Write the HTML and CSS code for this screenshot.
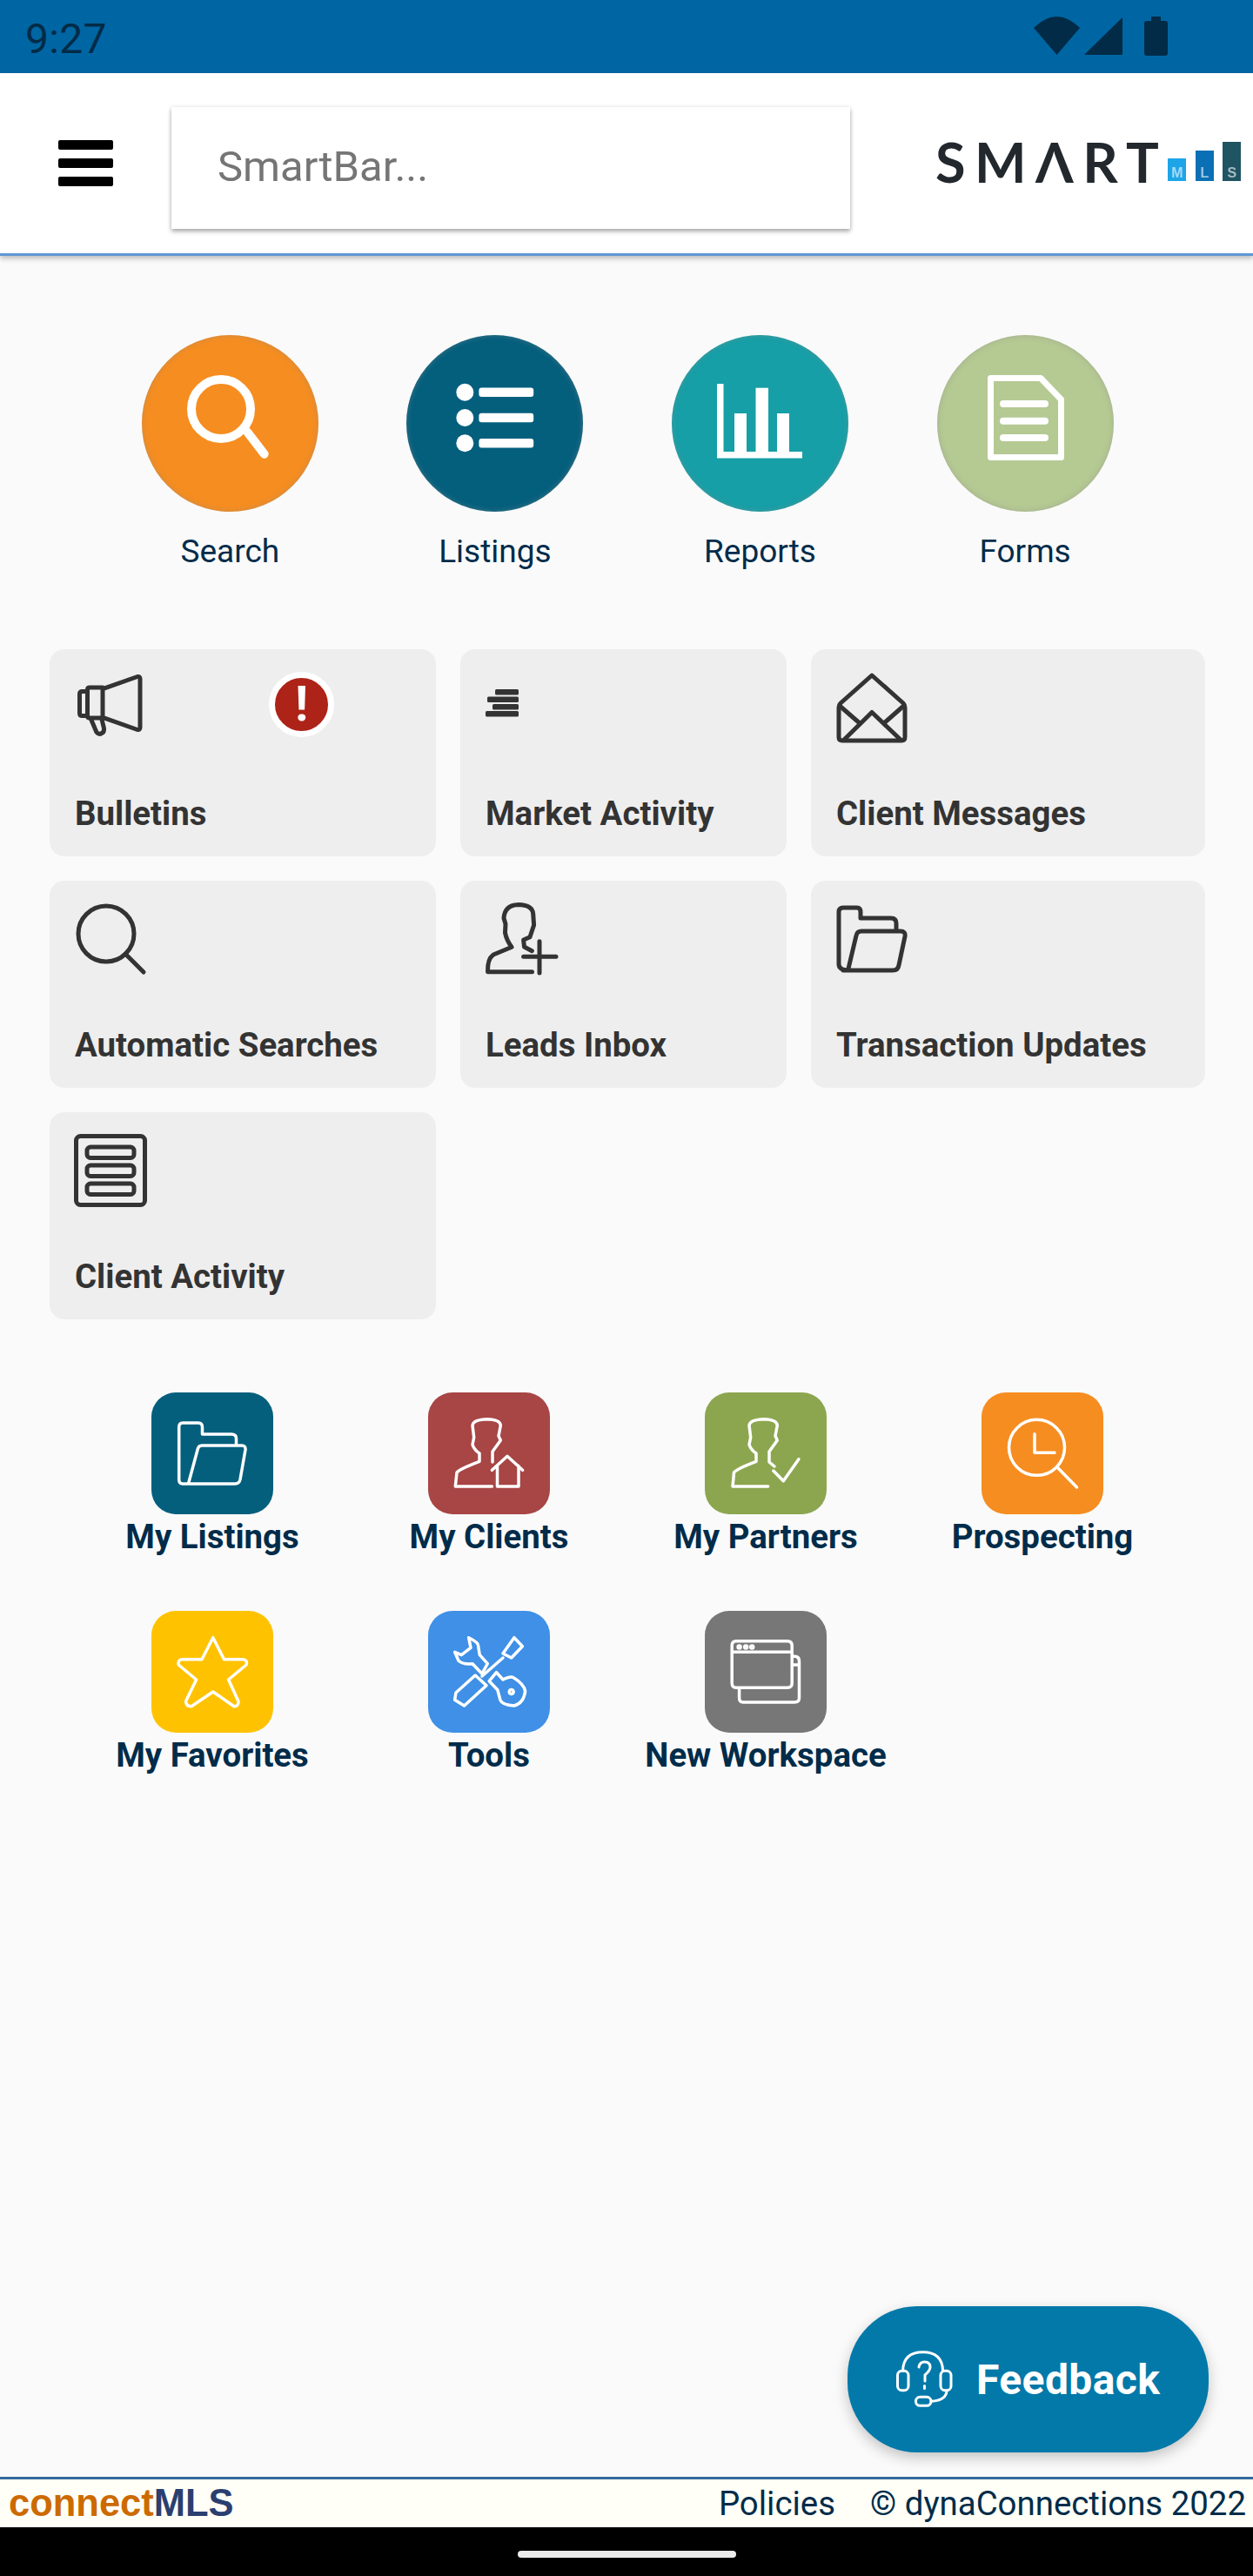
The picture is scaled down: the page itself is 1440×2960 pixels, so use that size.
FILE: index.html
```html
<!DOCTYPE html>
<html lang="en">
<head>
<meta charset="utf-8">
<title>connectMLS</title>
<link rel="stylesheet" href="styles.css">
</head>
<body>
<div class="status">
  <span class="time">9:27</span>
  <svg class="status-icons" viewBox="0 0 154 45">
    <path d="M0 13Q26.500 -13 53 13L26.500 44Z"/>
    <path d="M58 44H102V1Z"/>
    <path d="M135 0H146V5H151Q154 5 154 8V42Q154 45 151 45H130Q127 45 127 42V8Q127 5 130 5H135Z"/>
  </svg>
</div>
<header class="topbar">
  <div class="burger"><i></i><i></i><i></i></div>
  <div class="smartbar">SmartBar...</div>
  <div class="logo">
    <span class="logo-text">SMΛRT</span>
    <span class="logo-bars">
      <b class="bar-m">M</b><b class="bar-l">L</b><b class="bar-s">S</b>
    </span>
  </div>
</header>
<main class="content">
  <section class="circles">
    <a class="circle-item">
      <span class="circle c-orange">
        <svg class="white-line" viewBox="0 0 203 203"><circle cx="91" cy="85" r="34" stroke-width="10"/><path d="M121.500 111.700L140.700 136.700" stroke-width="10"/></svg>
      </span>
      <span class="circle-label">Search</span>
    </a>
    <a class="circle-item">
      <span class="circle c-navy">
        <svg class="white-fill" viewBox="0 0 203 203"><circle cx="67.300" cy="65.700" r="10"/><circle cx="67.300" cy="95" r="10"/><circle cx="67.300" cy="124.300" r="10"/><rect x="83.400" y="60.500" width="62.800" height="10.500" rx="3"/><rect x="83.400" y="89.800" width="62.800" height="10.500" rx="3"/><rect x="83.400" y="119" width="62.800" height="10.500" rx="3"/></svg>
      </span>
      <span class="circle-label">Listings</span>
    </a>
    <a class="circle-item">
      <span class="circle c-teal">
        <svg class="white-fill" viewBox="0 0 203 203"><rect x="52" y="56" width="7.500" height="85"/><rect x="52" y="134" width="98" height="7.500"/><rect x="72" y="90" width="14" height="46"/><rect x="96.500" y="60.700" width="14.500" height="75"/><rect x="121" y="90" width="14" height="46"/></svg>
      </span>
      <span class="circle-label">Reports</span>
    </a>
    <a class="circle-item">
      <span class="circle c-sage">
        <svg class="white-line" viewBox="0 0 203 203"><path d="M61.500 49.500H119L142.500 74V140.500H61.500Z" stroke-width="7"/><path d="M76 79H124M76 98.700H124M76 118H124" stroke-width="8"/></svg>
      </span>
      <span class="circle-label">Forms</span>
    </a>
  </section>

  <section class="cards">
    <a class="card">
      <svg class="card-icon" viewBox="0 0 90 90"><path d="M32 17.700L72 3.500Q75 3 75 6V62Q75 65 72 64.500L32 50.300ZM32 16H17Q14.500 16 14.500 18.500V48.500Q14.500 51 17 51H32M14.500 20.500H8.500Q5.500 20.500 5.500 23.500V45.500Q5.500 48.500 8.500 48.500H14.500M18 51L25 67.500Q27.500 70.500 31 68.500Q34 67 33.500 63L30.500 50.500"/></svg>
      <span class="card-label">Bulletins</span>
      <span class="alert">!</span>
    </a>
    <a class="card">
      <svg class="card-icon card-fill" viewBox="0 0 90 90"><rect x="11" y="18" width="27" height="6.500" rx="1.500"/><rect x="2" y="26.500" width="36" height="6.500" rx="1.500"/><rect x="8" y="35" width="30" height="6.500" rx="1.500"/><rect y="43" width="38" height="6.500" rx="1.500"/></svg>
      <span class="card-label">Market Activity</span>
    </a>
    <a class="card">
      <svg class="card-icon" viewBox="0 0 90 90"><path d="M41 2L77 34Q79 36 79 39V73Q79 77 75 77H7Q3 77 3 73V39Q3 36 5 34ZM41 2"/><path d="M9 76L41 44.500L74 76M4.500 37.500L27 57M77 37.500L56 56"/></svg>
      <span class="card-label">Client Messages</span>
    </a>
    <a class="card">
      <svg class="card-icon" viewBox="0 0 90 90"><circle cx="36" cy="33" r="32"/><path d="M58 56L79 77"/></svg>
      <span class="card-label">Automatic Searches</span>
    </a>
    <a class="card">
      <svg class="card-icon" viewBox="0 0 90 90"><path d="M53.500 76.700H2.500Q2 62 9 57L30 48.300Q24 40 22.500 31.700L23 21.700L21 15Q22 0 37.800 -0.500Q54 0 54.700 10L55.600 23L51 36.700L43.600 40L44.500 48L53.400 52.700"/><path d="M62 41.700V78M43.600 59.300H81"/></svg>
      <span class="card-label">Leads Inbox</span>
    </a>
    <a class="card">
      <svg class="card-icon" viewBox="0 0 90 90"><path d="M8 75H16Q3 75 3 68V8Q3 3 8 3H24Q28 3 28 8V15H63Q69 15 69 21V29M16 75H65Q71 75 72 69L79 36Q80 30 74 30H29Q24 30 23 35L14 73"/></svg>
      <span class="card-label">Transaction Updates</span>
    </a>
    <a class="card">
      <svg class="card-icon" viewBox="0 0 90 90"><rect x="1.500" y="-0.500" width="79" height="79" rx="5"/><rect x="14" y="12" width="54" height="12.500" rx="4"/><rect x="14" y="33" width="54" height="12.500" rx="4"/><rect x="14" y="54" width="54" height="12.500" rx="4"/></svg>
      <span class="card-label">Client Activity</span>
    </a>
  </section>

  <section class="tiles">
    <a class="tile-item">
      <span class="tile t-navy"><svg class="tile-icon" viewBox="0 0 140 140"><path d="M44 105H36Q31.700 105 31.700 100V40Q31.700 35 36 35H54Q58.500 35 58.500 40V48H92Q97.500 48 97.500 53V61M44 105H96Q101 105 102 100L108 66Q108.500 61 104 61H58Q54 61 53 66L43 103"/></svg></span>
      <span class="tile-label">My Listings</span>
    </a>
    <a class="tile-item">
      <span class="tile t-red"><svg class="tile-icon" viewBox="0 0 140 140"><path d="M73.400 108H31.300L33 92Q36 88 59 79.300V70Q53 66 51 60L52.700 51.700L51 38Q52 31 68 30.700Q83 31 83.300 38L81 50L83.300 55L74 68V80"/><path d="M73.400 89.300L91 73.300L108.600 89.300M79.500 84.500V108H104V84.500"/></svg></span>
      <span class="tile-label">My Clients</span>
    </a>
    <a class="tile-item">
      <span class="tile t-green"><svg class="tile-icon" viewBox="0 0 140 140"><path d="M72.700 108H32L33.500 92Q36 88 59 79.300V70Q53 66 51 60L52.700 51.700L51 38Q52 31 68 30.700Q83 31 83.300 38L81 50L83.300 55L74 68V80L80 85"/><path d="M78.800 90L90.300 101.700L107.900 76.700"/></svg></span>
      <span class="tile-label">My Partners</span>
    </a>
    <a class="tile-item">
      <span class="tile t-orange"><svg class="tile-icon" viewBox="0 0 140 140"><circle cx="63.500" cy="63.300" r="32"/><path d="M61 47.700V69.300H84M88 87L109.500 109"/></svg></span>
      <span class="tile-label">Prospecting</span>
    </a>
    <a class="tile-item">
      <span class="tile t-yellow"><svg class="tile-icon" viewBox="0 0 140 140"><path d="M70.800 30.700L83.500 55.700H104.600Q111 56 109 62L88.600 79L100 104Q100 110 95 109.700L70.800 93L46 109.700Q40 110 39.500 104L51.600 79L31.200 62Q30 56 35.700 55.700H58Z"/></svg></span>
      <span class="tile-label">My Favorites</span>
    </a>
    <a class="tile-item">
      <span class="tile t-blue"><svg class="tile-icon" viewBox="0 0 140 140"><path d="M98.900 30.700L108.400 40.700L95.700 54L86 49ZM86 54L62 75M54.200 74L67 85.700L41.500 109L30.600 102.300L32 94Z"/><path d="M46.600 30.700Q57 36 57.400 39L59.300 50.700L68.300 60.700L61.900 72.300L51 60.700Q40 62 35 57.300L30.600 47.300L38.300 50.700L49 42.300ZM78.500 70.700L86.100 79Q96 74 98.900 77.300Q110 84 111.600 92.300Q110 106 98.900 109Q85 108 82.900 102.300L79.800 90.700L70.200 80.700Z"/><circle cx="95.700" cy="93" r="2.500"/></svg></span>
      <span class="tile-label">Tools</span>
    </a>
    <a class="tile-item">
      <span class="tile t-grey"><svg class="tile-icon" viewBox="0 0 140 140"><path d="M36 34.700H95Q100.200 34.700 100.200 40V83Q100.200 88.300 95 88.300H36Q31.200 88.300 31.200 83V40Q31.200 34.700 36 34.700ZM31.200 47.300H100.200M100.200 52.300H103Q108.500 52.300 108.500 58V100Q108.500 105 103 105H44Q39.600 105 39.600 100V88.300M100.200 62H108.500"/><circle cx="39.600" cy="41.500" r="1.500"/><circle cx="47.200" cy="41.500" r="1.500"/><circle cx="54.200" cy="41.500" r="1.500"/></svg></span>
      <span class="tile-label">New Workspace</span>
    </a>
  </section>

  <a class="fab">
    <svg class="fab-icon" viewBox="0 0 64 64"><path d="M7.600 22.300Q8 0.700 30.600 0.700Q53 0.700 53.600 22.300M58 44.700Q58 56 40 57.300"/><rect x="1.500" y="22.300" width="12.500" height="22.400" rx="5"/><rect x="51" y="22.300" width="12" height="22.400" rx="5"/><rect x="22.400" y="52.300" width="17.600" height="10" rx="5"/><path d="M26 18Q27 12 32.500 12Q39 12 39 18Q39 22 33 27V34M32.500 39.500V42.500"/></svg>
    <span>Feedback</span>
  </a>
</main>
<footer class="footer">
  <div class="brand"><span class="brand-a">connect</span><span class="brand-b">MLS</span></div>
  <div class="foot-links"><span>Policies</span><span>© dynaConnections 2022</span></div>
</footer>
<div class="navbar"><i></i></div>
</body>
</html>
```
FILE: styles.css
```css
* { box-sizing: border-box; }
html, body { margin: 0; padding: 0; }
body {
  width: 1440px;
  height: 2960px;
  display: flex;
  flex-direction: column;
  background: #fafafa;
  font-family: Roboto, "Liberation Sans", sans-serif;
  color: #002c4a;
  overflow: hidden;
}
a { display: block; color: inherit; text-decoration: none; }
svg { display: block; overflow: visible; }

.status {
  height: 84px;
  flex: none;
  background: #0066a3;
  color: #022b47;
  display: flex;
  align-items: flex-start;
  justify-content: space-between;
  padding: 17px 98px 0 29px;
}
.time { font-size: 48px; line-height: 56px; letter-spacing: .3px; }
.status-icons { width: 154px; height: 45px; margin-top: 2px; fill: #022b47; }

.topbar {
  height: 210px;
  flex: none;
  background: #fff;
  border-bottom: 3px solid #5f97d3;
  box-shadow: 0 3px 6px rgba(0,0,0,.26);
  display: flex;
  align-items: flex-start;
  position: relative;
  z-index: 2;
}
.burger {
  width: 63px;
  margin: 77px 0 0 67px;
  display: flex;
  flex-direction: column;
  gap: 10.500px;
}
.burger i { display: block; height: 10.500px; background: #000; border-radius: 2px; }
.smartbar {
  width: 780px;
  height: 140px;
  margin: 39px 0 0 67px;
  padding: 0 0 0 53px;
  background: #fff;
  color: #757575;
  font-size: 49px;
  line-height: 138px;
  box-shadow: 0 3px 5px rgba(0,0,0,.32), 0 0 5px rgba(0,0,0,.08);
}
.logo {
  margin: 79px 0 0 98px;
  width: 350px;
  height: 45px;
  display: flex;
  justify-content: space-between;
  align-items: flex-end;
  filter: blur(.6px);
}
.logo-text {
  font-family: Lato, sans-serif;
  font-weight: 700;
  font-size: 63px;
  line-height: 45px;
  letter-spacing: 10.500px;
  color: #22282d;
  white-space: nowrap;
}
.logo-bars { display: flex; align-items: flex-end; gap: 10.500px; }
.logo-bars b {
  display: block;
  width: 21px;
  color: rgba(255,255,255,.6);
  font: 700 16px/16px "Liberation Sans", sans-serif;
  text-align: center;
}
.logo-bars .bar-m { height: 26px; background: #1ea5e8; padding-top: 9px; }
.logo-bars .bar-l { height: 35px; background: #0a6fb4; padding-top: 18px; }
.logo-bars .bar-s { height: 45px; background: #1f5463; padding-top: 28px; }

.content {
  flex: 1;
  position: relative;
}

.circles {
  display: grid;
  grid-template-columns: repeat(4, 304.600px);
  padding: 91px 0 0 112px;
}
.circle-item { display: flex; flex-direction: column; align-items: center; }
.circle {
  width: 203px;
  height: 203px;
  border-radius: 50%;
  box-shadow: inset 0 0 6px rgba(140,140,140,.45);
}
.circle svg { width: 203px; height: 203px; }
.c-orange { background: #f68d20; }
.c-navy { background: #045f7d; }
.c-teal { background: #169fa7; }
.c-sage { background: #b5c993; }
.circle-label { margin-top: 25px; font-size: 37px; line-height: 42px; }
.white-line { fill: none; stroke: #fff; stroke-linecap: round; stroke-linejoin: round; }
.white-fill { fill: #fff; }

.cards {
  display: grid;
  grid-template-columns: 444px 375px 453px;
  grid-auto-rows: 238px;
  gap: 28px;
  padding: 0 0 0 57px;
  margin-top: 91px;
}
.card {
  background: #eee;
  border-radius: 17px;
  padding: 28px 29px 0;
  position: relative;
  color: #333;
}
.card-icon {
  width: 90px;
  height: 90px;
  fill: none;
  stroke: #333;
  stroke-width: 5;
  stroke-linecap: round;
  stroke-linejoin: round;
}
.card-icon.card-fill { fill: #333; stroke: none; }
.card-label {
  display: block;
  margin-top: 50px;
  font-size: 38.400px;
  line-height: 42px;
  font-weight: 700;
  white-space: nowrap;
}
.alert {
  position: absolute;
  left: 252px;
  top: 26px;
  width: 75px;
  height: 75px;
  border-radius: 50%;
  background: #ae2318;
  border: 7px solid #fff;
  color: #fff;
  font: 700 56px/60px Roboto, sans-serif;
  text-align: center;
}

.tiles {
  display: grid;
  grid-template-columns: repeat(4, 318px);
  grid-auto-rows: 251px;
  padding-left: 85px;
  margin-top: 84px;
}
.tile-item { display: flex; flex-direction: column; align-items: center; }
.tile { width: 140px; height: 140px; border-radius: 28px; }
.tile-icon {
  width: 140px;
  height: 140px;
  fill: none;
  stroke: #fff;
  stroke-width: 3.500;
  stroke-linecap: round;
  stroke-linejoin: round;
}
.t-navy { background: #045f7d; }
.t-red { background: #a84545; }
.t-green { background: #8ca64f; }
.t-orange { background: #f68d20; }
.t-yellow { background: #ffc200; }
.t-blue { background: #3f90e6; }
.t-grey { background: #777; }
.tile-label { margin-top: 5px; font-size: 38.400px; line-height: 42px; font-weight: 700; white-space: nowrap; }

.fab {
  position: absolute;
  left: 974px;
  top: 2356px;
  width: 415px;
  height: 168px;
  border-radius: 80px;
  background: #0279a9;
  color: #fff;
  box-shadow: 0 6px 16px rgba(0,0,0,.22);
  display: flex;
  align-items: center;
  gap: 28px;
  padding-left: 56px;
  font-size: 48px;
  letter-spacing: .4px;
  font-weight: 700;
}
.fab-icon {
  width: 64px;
  height: 64px;
  fill: none;
  stroke: #fff;
  stroke-width: 3;
  stroke-linecap: round;
  stroke-linejoin: round;
}

.footer {
  height: 58px;
  flex: none;
  background: #fffff7;
  border-top: 3px solid #336a9e;
  display: flex;
  justify-content: space-between;
  align-items: center;
  padding: 0 8px 0 10px;
}
.brand { font: 700 43.500px/55px "Liberation Sans", sans-serif; }
.brand-a { color: #cc6a00; }
.brand-b { color: #2a3f70; }
.foot-links { display: flex; gap: 40px; font-size: 38.400px; line-height: 50px; }

.navbar {
  height: 56px;
  flex: none;
  background: #000;
  display: flex;
  justify-content: center;
  padding-top: 27px;
}
.navbar i { display: block; width: 251px; height: 8px; border-radius: 4px; background: #ebebeb; }
```
